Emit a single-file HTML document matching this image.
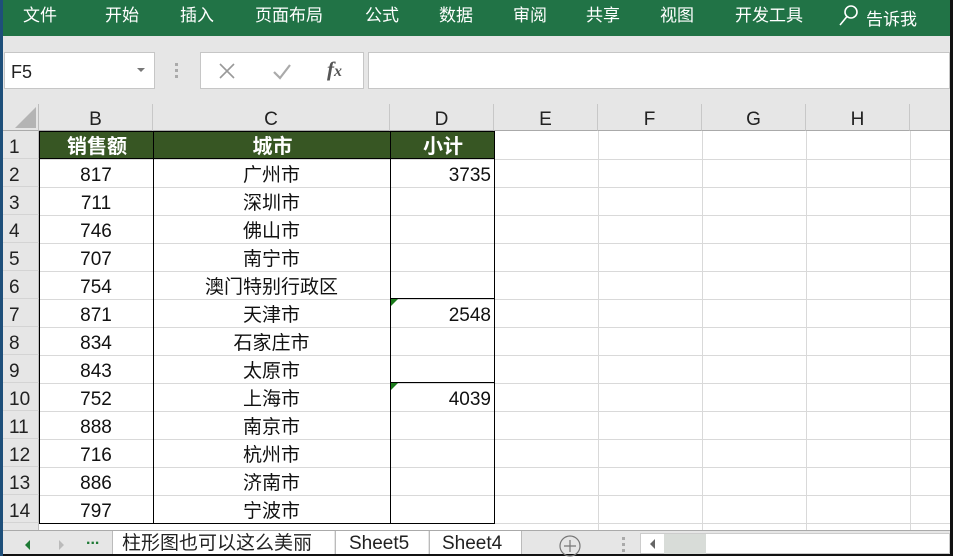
<!DOCTYPE html>
<html><head><meta charset="utf-8"><style>
*{margin:0;padding:0;box-sizing:border-box}
body{width:953px;height:556px;overflow:hidden;background:#fff;position:relative;font-family:"Liberation Sans","Noto Sans CJK SC",sans-serif}
.a{position:absolute}
.rib{left:0;top:0;width:950px;height:36px;background:#217346;color:#fff;font-size:17px}
.rib span{position:absolute;top:1px}
.rh{left:3px;width:36px;height:28px;font-size:19px;color:#222;padding-left:6px;line-height:33px;background:#e6e6e6;border-bottom:1px solid #d4d4d4;border-right:1px solid #bdbdbd}
.ch{top:104px;height:27px;background:#e6e6e6;border-right:1px solid #c8c8c8;border-bottom:1px solid #aaa;text-align:center;font-size:19px;line-height:32px;color:#222}
.c{height:28px;text-align:center;font-size:19px;line-height:33px;color:#111}
.vl{top:131px;width:1px;height:399px;background:#d9d9d9}
.hl{left:39px;width:911px;height:1px;background:#d9d9d9}
</style></head><body>
<div class="a rib">
<span style="left:23px">文件</span><span style="left:105px">开始</span><span style="left:180px">插入</span><span style="left:255px">页面布局</span><span style="left:365px">公式</span><span style="left:439px">数据</span><span style="left:513px">审阅</span><span style="left:586px">共享</span><span style="left:660px">视图</span><span style="left:735px">开发工具</span>
<svg class="a" style="left:838px;top:4px" width="22" height="22"><circle cx="13" cy="8" r="6" fill="none" stroke="#fff" stroke-width="1.6"/><line x1="9" y1="12.5" x2="2" y2="21" stroke="#fff" stroke-width="1.6"/></svg>
<span style="left:866px;top:5px">告诉我</span>
</div>
<div class="a" style="left:0;top:36px;width:950px;height:94px;background:#e6e6e6"></div>
<div class="a" style="left:0;top:0;width:3px;height:556px;background:#1e4f7a"></div>
<div class="a" style="left:950px;top:0;width:3px;height:556px;background:#111"></div>
<div class="a" style="left:4px;top:52px;width:151px;height:37px;background:#fff;border:1px solid #c6c6c6;font-size:18px;line-height:38px;padding-left:6px;color:#222">F5<span class="a" style="left:132px;top:15px;border:4px solid transparent;border-top:4px solid #777"></span></div>
<div class="a" style="left:175px;top:63px;width:3px;height:3px;background:#aaa;box-shadow:0 6px #aaa,0 12px #aaa"></div>
<div class="a" style="left:200px;top:52px;width:164px;height:37px;background:#fff;border:1px solid #c6c6c6">
<svg class="a" style="left:17px;top:9px" width="18" height="18"><path d="M2 2L16 16M16 2L2 16" stroke="#999" stroke-width="1.6"/></svg>
<svg class="a" style="left:71px;top:9px" width="20" height="18"><path d="M2 10L8 16L18 3" stroke="#aaa" stroke-width="2.2" fill="none"/></svg>
<span class="a" style="left:126px;top:4px;font-family:'Liberation Serif',serif;font-style:italic;font-weight:bold;font-size:21px;color:#555">f<span style="font-size:16px">x</span></span>
</div>
<div class="a" style="left:368px;top:52px;width:582px;height:37px;background:#fff;border:1px solid #c6c6c6"></div>
<div class="a" style="left:3px;top:104px;width:36px;height:27px;background:#e6e6e6;border-right:1px solid #bdbdbd;border-bottom:1px solid #aaa"><div class="a" style="left:12px;top:3px;width:0;height:0;border-left:21px solid transparent;border-bottom:21px solid #b4b4b4"></div></div>
<div class="a ch" style="left:39px;width:114px">B</div>
<div class="a ch" style="left:153px;width:237px">C</div>
<div class="a ch" style="left:390px;width:104px">D</div>
<div class="a ch" style="left:494px;width:104px">E</div>
<div class="a ch" style="left:598px;width:104px">F</div>
<div class="a ch" style="left:702px;width:104px">G</div>
<div class="a ch" style="left:806px;width:104px">H</div>
<div class="a ch" style="left:910px;width:40px;border-right:0"></div>
<div class="a vl" style="left:598px"></div><div class="a vl" style="left:702px"></div><div class="a vl" style="left:806px"></div><div class="a vl" style="left:910px"></div>
<div class="a hl" style="top:159px"></div><div class="a hl" style="top:187px"></div><div class="a hl" style="top:215px"></div><div class="a hl" style="top:243px"></div><div class="a hl" style="top:271px"></div><div class="a hl" style="top:299px"></div><div class="a hl" style="top:327px"></div><div class="a hl" style="top:355px"></div><div class="a hl" style="top:383px"></div><div class="a hl" style="top:411px"></div><div class="a hl" style="top:439px"></div><div class="a hl" style="top:467px"></div><div class="a hl" style="top:495px"></div><div class="a hl" style="top:523px"></div>
<div class="a rh" style="top:131px">1</div><div class="a rh" style="top:159px">2</div><div class="a rh" style="top:187px">3</div><div class="a rh" style="top:215px">4</div><div class="a rh" style="top:243px">5</div><div class="a rh" style="top:271px">6</div><div class="a rh" style="top:299px">7</div><div class="a rh" style="top:327px">8</div><div class="a rh" style="top:355px">9</div><div class="a rh" style="top:383px">10</div><div class="a rh" style="top:411px">11</div><div class="a rh" style="top:439px">12</div><div class="a rh" style="top:467px">13</div><div class="a rh" style="top:495px">14</div>
<div class="a" style="left:3px;top:523px;width:36px;height:7px;background:#e6e6e6;border-right:1px solid #bdbdbd"></div>
<div class="a" style="left:39px;top:131px;width:456px;height:28px;background:#375623;border:1px solid #000;color:#fff;font-weight:bold;font-size:20px;line-height:31px">
<span class="a" style="left:0;width:114px;text-align:center">销售额</span><span class="a" style="left:114px;width:237px;text-align:center">城市</span><span class="a" style="left:351px;width:104px;text-align:center">小计</span></div>
<div class="a" style="left:39px;top:158px;width:456px;height:366px;border:1px solid #000;border-top:0"></div>
<div class="a" style="left:153px;top:131px;width:1px;height:393px;background:#000"></div>
<div class="a" style="left:390px;top:131px;width:1px;height:393px;background:#000"></div>
<div class="a" style="left:39px;top:158px;width:351px;height:366px;background:repeating-linear-gradient(to bottom,transparent 0,transparent 28px,#000 28px,#000 29px);background-size:100% 28px;background-position:0 1px"></div>
<div class="a" style="left:390px;top:298px;width:105px;height:1px;background:#000"></div>
<div class="a" style="left:390px;top:382px;width:105px;height:1px;background:#000"></div>
<div class="a" style="left:391px;top:299px;border-top:7px solid #1a7a1a;border-right:7px solid transparent"></div>
<div class="a" style="left:391px;top:383px;border-top:7px solid #1a7a1a;border-right:7px solid transparent"></div>
<div class="a" style="left:39px;top:159px;width:114px">
<div class="c">817</div><div class="c">711</div><div class="c">746</div><div class="c">707</div><div class="c">754</div><div class="c">871</div><div class="c">834</div><div class="c">843</div><div class="c">752</div><div class="c">888</div><div class="c">716</div><div class="c">886</div><div class="c">797</div></div>
<div class="a" style="left:153px;top:159px;width:237px">
<div class="c">广州市</div><div class="c">深圳市</div><div class="c">佛山市</div><div class="c">南宁市</div><div class="c">澳门特别行政区</div><div class="c">天津市</div><div class="c">石家庄市</div><div class="c">太原市</div><div class="c">上海市</div><div class="c">南京市</div><div class="c">杭州市</div><div class="c">济南市</div><div class="c">宁波市</div></div>
<div class="a c" style="left:390px;top:159px;width:101px;text-align:right">3735</div>
<div class="a c" style="left:390px;top:299px;width:101px;text-align:right">2548</div>
<div class="a c" style="left:390px;top:383px;width:101px;text-align:right">4039</div>
<div class="a" style="left:3px;top:530px;width:947px;height:24px;background:#e6e6e6;border-top:1px solid #aaa"></div>
<div class="a" style="left:3px;top:554px;width:950px;height:2px;background:#111"></div>
<div class="a" style="left:25px;top:540px;border-right:5px solid #1e7a35;border-top:5px solid transparent;border-bottom:5px solid transparent"></div>
<div class="a" style="left:59px;top:540px;border-left:5px solid #bbb;border-top:5px solid transparent;border-bottom:5px solid transparent"></div>
<div class="a" style="left:86px;top:531px;font-size:16px;color:#1e7a35;font-weight:bold">...</div>
<div class="a" style="left:112px;top:531px;width:222px;height:23px;background:#fff;border-left:1px solid #bbb;font-size:19px;line-height:25px;padding-left:9px;color:#222">柱形图也可以这么美丽</div>
<div class="a" style="left:335px;top:531px;width:93px;height:23px;background:#fff;border-left:1px solid #bbb;font-size:19px;line-height:25px;padding-left:13px;color:#222">Sheet5</div>
<div class="a" style="left:429px;top:531px;width:93px;height:23px;background:#fff;border-left:1px solid #bbb;border-right:1px solid #bbb;font-size:19px;line-height:25px;padding-left:12px;color:#222">Sheet4</div>
<svg class="a" style="left:559px;top:535px" width="22" height="22"><circle cx="11" cy="11" r="10" fill="none" stroke="#777" stroke-width="1.2"/><path d="M11 5V17M5 11H17" stroke="#777" stroke-width="1.2"/></svg>
<div class="a" style="left:622px;top:537px;width:3px;height:3px;background:#aaa;box-shadow:0 6px #aaa,0 12px #aaa"></div>
<div class="a" style="left:640px;top:533px;width:310px;height:21px;background:#fff;border:1px solid #ccc"></div>
<div class="a" style="left:650px;top:539px;border-right:5px solid #666;border-top:5px solid transparent;border-bottom:5px solid transparent"></div>
<div class="a" style="left:664px;top:534px;width:42px;height:20px;background:#d8dcd8"></div>
</body></html>
